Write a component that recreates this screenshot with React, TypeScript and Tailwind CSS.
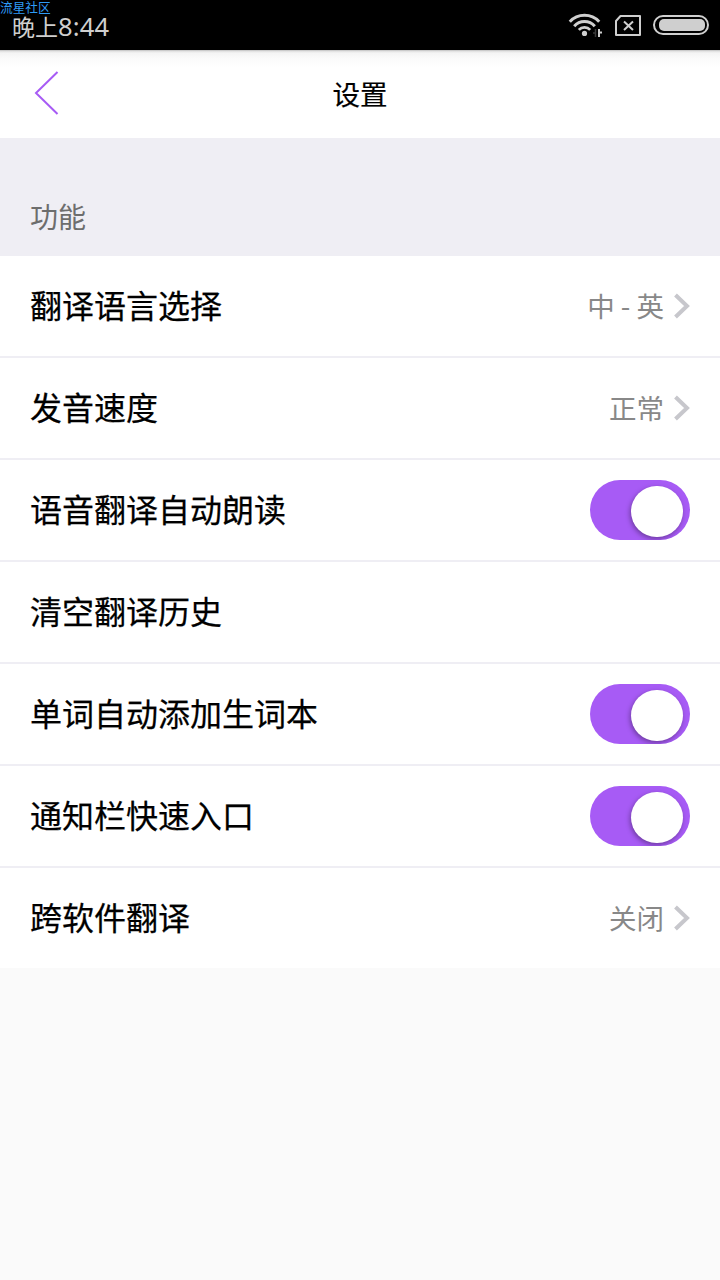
const rows = [
  { label: "翻译语言选择", value: "中 - 英" },
  { label: "发音速度", value: "正常" },
  { label: "语音翻译自动朗读", toggle: true },
  { label: "清空翻译历史" },
  { label: "单词自动添加生词本", toggle: true },
  { label: "通知栏快速入口", toggle: true },
  { label: "跨软件翻译", value: "关闭" },
];

function StatusBar() {
  return (
    <div className="relative flex h-[50px] justify-between bg-black pl-3 pr-[10px] text-[#cfcfcf]">
      <span className="absolute left-0 top-0 h-[13px] whitespace-nowrap text-[12.7px] leading-[13px] text-[#2f9bf5]">
        流星社区
      </span>
      <div className="flex items-baseline pt-[13px] leading-[26px]">
        <span className="text-[23px]">晚上</span>
        <span className="font-['Noto_Sans',sans-serif] text-[25.5px] tracking-[0.2px]">8:44</span>
      </div>
      <svg width="152" height="50" viewBox="0 0 152 50" fill="none" stroke="currentColor">
        {/* wifi */}
        <path d="M11.8 21.8a20 20 0 0 1 29.4 0" strokeWidth="3" />
        <path d="M16.2 26.2a13.8 13.8 0 0 1 20.6 0" strokeWidth="3" />
        <path d="M20.8 29.9a7.8 7.8 0 0 1 11.4 0" strokeWidth="2.8" />
        <circle cx="26.5" cy="33.4" r="2.6" fill="currentColor" stroke="none" />
        <path d="M37.5 29v8M35 33h2" stroke="#3a3a3a" strokeWidth="1.5" />
        <path d="M41 29v8" strokeWidth="2" />
        <path d="M42 32.5h2" strokeWidth="2" />
        {/* no sim */}
        <path d="M62.5 16H82v19H58V21z" strokeWidth="2" strokeLinejoin="round" />
        <path d="m66 21.5 9 8.5m0-8.5L66 30" strokeWidth="2" />
        {/* battery */}
        <rect x="96" y="16" width="54" height="18" rx="9" strokeWidth="2" />
        <rect x="101" y="19" width="46" height="12" rx="5" fill="currentColor" stroke="none" />
      </svg>
    </div>
  );
}

function Toggle() {
  return (
    <div className="flex h-[60px] w-[100px] justify-end overflow-hidden rounded-full bg-[#a75bf5] pr-[7px] pt-[6px]">
      <div className="h-[51px] w-[52px] rounded-full bg-white shadow-[-1px_2px_5px_rgba(0,0,0,0.35)]" />
    </div>
  );
}

function Chevron() {
  return (
    <svg width="18" height="28" viewBox="0 0 18 28" fill="none" className="ml-[8px]">
      <path d="M3.5 3 15 14 3.5 25" stroke="#c7c7cc" strokeWidth="4" />
    </svg>
  );
}

export default function App() {
  return (
    <div className="min-h-[1280px] w-full bg-[#fafafa] font-['Noto_Sans_CJK_SC',sans-serif] text-black">
      <StatusBar />
      <header className="grid h-[88px] grid-cols-3 items-center bg-white bg-[linear-gradient(to_bottom,#b8b8b8_0px,#dedede_1px,#f4f4f4_3px,#fafafa_8px,#ffffff_18px)]">
        <svg width="30" height="46" viewBox="0 0 30 46" fill="none" className="mb-[2px] ml-[32px]">
          <path d="M25.5 2 4 23l21.5 21" stroke="#a75bf5" strokeWidth="2" />
        </svg>
        <h1 className="pb-[2px] text-center text-[27.5px] leading-[40px] [-webkit-text-stroke:0.2px_black]">设置</h1>
      </header>
      <div className="flex h-[118px] items-end bg-[#efeef4] px-[30px] pb-[20px] text-[28px] leading-[40px] text-[#6d6d6d]">
        功能
      </div>
      <div className="divide-y-2 divide-[#efeef4] bg-white">
        {rows.map((row) => (
          <div key={row.label} className="box-content flex h-[100px] items-center justify-between">
            <span className="pb-[4px] pl-[30px] text-[32px] leading-[48px] [-webkit-text-stroke:0.25px_black]">
              {row.label}
            </span>
            <div className="flex items-center pr-[30px]">
              {row.value && (
                <>
                  <span className="pb-[2px] text-[27.5px] leading-[40px] text-[#888888]">{row.value}</span>
                  <Chevron />
                </>
              )}
              {row.toggle && <Toggle />}
            </div>
          </div>
        ))}
      </div>
    </div>
  );
}
